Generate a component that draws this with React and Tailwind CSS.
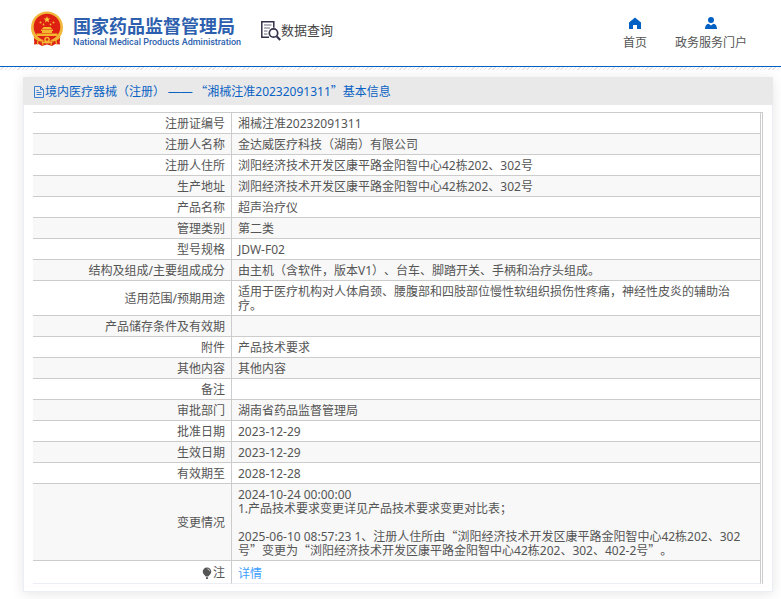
import React from 'react';

const rows = [
  { label: '注册证编号', value: '湘械注准20232091311' },
  { label: '注册人名称', value: '金达威医疗科技（湖南）有限公司' },
  { label: '注册人住所', value: '浏阳经济技术开发区康平路金阳智中心42栋202、302号' },
  { label: '生产地址', value: '浏阳经济技术开发区康平路金阳智中心42栋202、302号' },
  { label: '产品名称', value: '超声治疗仪' },
  { label: '管理类别', value: '第二类' },
  { label: '型号规格', value: 'JDW-F02' },
  { label: '结构及组成/主要组成成分', value: '由主机（含软件，版本V1）、台车、脚踏开关、手柄和治疗头组成。' },
  { label: '适用范围/预期用途', value: '适用于医疗机构对人体肩颈、腰腹部和四肢部位慢性软组织损伤性疼痛，神经性皮炎的辅助治疗。' },
  { label: '产品储存条件及有效期', value: '' },
  { label: '附件', value: '产品技术要求' },
  { label: '其他内容', value: '其他内容' },
  { label: '备注', value: '' },
  { label: '审批部门', value: '湖南省药品监督管理局' },
  { label: '批准日期', value: '2023-12-29' },
  { label: '生效日期', value: '2023-12-29' },
  { label: '有效期至', value: '2028-12-28' },
  {
    label: '变更情况',
    value:
      '2024-10-24 00:00:00\n1.产品技术要求变更详见产品技术要求变更对比表；\n\n2025-06-10 08:57:23 1、注册人住所由“浏阳经济技术开发区康平路金阳智中心42栋202、302号”变更为“浏阳经济技术开发区康平路金阳智中心42栋202、302、402-2号”。',
  },
];

// Quotes are set in the Chinese font so that they take a full-width cell
const Zh = ({ text }) =>
  text.split(/([“”])/).map((part, i) =>
    /^[“”]$/.test(part) ? (
      <span key={i} className="font-['Noto_Sans_CJK_SC',sans-serif] leading-none">{part}</span>
    ) : (
      part
    )
  );

const Emblem = () => (
  <svg viewBox="0 0 34 36" className="w-[34px] h-9 shrink-0" aria-hidden="true">
    <path d="M5 24l-1 9.500 4.500-.5 3.500 2 5-1.500 5 1.500 3.500-2 4.500.5L29 24z" fill="#dc2417" />
    <circle cx="17" cy="16.500" r="16" fill="#f2b83c" />
    <circle cx="17" cy="16" r="13.300" fill="#de2013" />
    <path d="M17 5.200l.9 2.300 2.500.1-2 1.500.7 2.400-2.100-1.400-2.100 1.400.7-2.400-2-1.500 2.500-.1z" fill="#f8cf3c" />
    <g fill="#f5b52e">
      <circle cx="10.500" cy="11.500" r="1" />
      <circle cx="13.500" cy="13.500" r=".9" />
      <circle cx="20.500" cy="13.500" r=".9" />
      <circle cx="23.500" cy="11.500" r="1" />
      <path d="M12 18l1.500-2h7l1.500 2zM11 18.500h12v1.500H11zM12 20h10v2H12zM6.500 22.500h21v2.500h-21z" />
    </g>
    <path d="M4 25c2 3 5 4.500 9 4.700l1.500-1.700h5l1.500 1.700c4-.2 7-1.700 9-4.700v5l-5 2-8-2.500L9 32l-5-2z" fill="#dc2417" />
    <path d="M4 26c2.500 3 6 4 9.500 4.200M30 26c-2.500 3-6 4-9.500 4.200M8 29.500l-.5 4M12.500 31l.5 3.500M21.500 31l-.5 3.500M26 29.500l.5 4" stroke="#f5b52e" strokeWidth="1.200" fill="none" />
    <circle cx="17" cy="28.500" r="2.800" fill="#f5b52e" />
    <circle cx="17" cy="28.500" r="1.200" fill="#de2013" />
  </svg>
);

const QueryIcon = () => (
  <svg viewBox="0 0 20 20" className="w-5 h-5 shrink-0" fill="none" stroke="#33324a" aria-hidden="true">
    <path d="M8 16.200H.8V.8h12v6" strokeWidth="1.500" />
    <path d="M3 4h7.500M3 7h6M3 10h3.500M3 13h3.500" strokeWidth="1.100" stroke="#66657a" />
    <circle cx="12.500" cy="12" r="4.200" strokeWidth="1.700" />
    <path d="M15.800 15.500l3.500 3.500" strokeWidth="2.200" />
  </svg>
);

const HomeIcon = () => (
  <svg viewBox="0 0 12 12" className="w-3 h-3" fill="#0060c4" aria-hidden="true">
    <path d="M6 .5l6 5V12H8V8H4v4H0V5.500z" />
  </svg>
);

const UserIcon = () => (
  <svg viewBox="0 0 12 12" className="w-3 h-3" fill="#0060c4" aria-hidden="true">
    <circle cx="6" cy="3" r="3" />
    <path d="M0 12c0-3 1.200-4.700 3.500-5.200L6 8.500l2.500-1.700C10.800 7.300 12 9 12 12z" />
  </svg>
);

const DocIcon = () => (
  <svg viewBox="0 0 11 12" className="w-[11px] h-3 shrink-0" fill="none" stroke="#3a7fd0" aria-hidden="true">
    <path d="M.5.5h6l3 3v8h-9zM6.500.5v3h3M2.500 4.500h2M2.500 6.500h5M2.500 8.500h5" />
  </svg>
);

const BulbIcon = () => (
  <svg viewBox="0 0 10 12" className="w-2.5 h-3" fill="#555" aria-hidden="true">
    <path d="M5 .5a4.300 4.300 0 0 1 4.300 4.300C9.300 7 7 8.200 6.300 9.500H3.700C3 8.200.7 7 .7 4.800A4.300 4.300 0 0 1 5 .5zM3.800 10.200h2.400L5.800 12H4.200z" />
    <path d="M5.500 2c1.200.2 2 1 2.200 2.200" stroke="#fff" strokeWidth=".8" fill="none" />
  </svg>
);

const Header = () => (
  <header className="flex h-[67px] items-start justify-between border-b border-[#0060c4] pl-[30px] pr-[34px]">
    <div className="flex items-start">
      <a href="#home" className="mt-[11px] flex items-start gap-[9px]">
        <Emblem />
        <span className="flex flex-col pt-[3px] text-[#2d5fae]">
          <span className="text-[18px] leading-[22px] font-bold font-['Noto_Sans_CJK_SC',sans-serif]">国家药品监督管理局</span>
          <span className="text-[9px] leading-3 font-medium font-[Roboto,sans-serif]">National Medical Products Administration</span>
        </span>
      </a>
      <h1 className="mt-[21px] ml-5 flex items-start text-[13px] leading-[18px] text-[#444]">
        <QueryIcon />
        数据查询
      </h1>
    </div>
    <nav className="mt-[17px] flex gap-7 leading-4 text-[#555]">
      <a href="#index" className="flex flex-col items-center gap-1.5">
        <HomeIcon />
        首页
      </a>
      <a href="#portal" className="flex flex-col items-center gap-1.5">
        <UserIcon />
        政务服务门户
      </a>
    </nav>
  </header>
);

const Row = ({ label, children }) => (
  <tr className="even:bg-[#f8f8f8]">
    <th scope="row" className="border-r border-b border-[#ccc] pt-1 pr-1.5 pb-0.5 text-right align-middle font-normal">
      {label}
    </th>
    <td className="h-[21px] border-r border-b border-[#ccc] pt-1 pr-2.5 pb-0.5 pl-1.5 align-middle whitespace-pre-line">
      {children}
    </td>
  </tr>
);

export default function App() {
  return (
    <div className="bg-white pb-2 text-[12px] font-['Noto_Sans','Noto_Sans_CJK_SC',sans-serif] [text-spacing-trim:space-all]">
      <Header />
      <div className="h-[3px] bg-[repeating-linear-gradient(135deg,#fff_0_2px,#e4e4e4_2px_3px)]" />
      <main className="mt-[7px] mr-2 ml-[23px] bg-white shadow-[0_2px_12px_rgba(0,0,0,0.1)]">
        <h2 className="flex h-7 items-center bg-[#e9e9e9] pt-0.5 pl-[11px] leading-4 text-[#0a62c4]">
          <DocIcon />
          <span>
            境内医疗器械（注册）{' '}
            <span className="font-['Liberation_Sans',sans-serif]">——</span>{' '}
            <Zh text="“湘械注准20232091311”基本信息" />
          </span>
        </h2>
        <div className="border border-t-0 border-[#ebeef5] px-[9px] pt-[7px] pb-[7px]">
          <div className="border-t border-r border-[#ccc] pr-px">
            <table className="w-full table-fixed border-separate border-spacing-0 leading-[14px] text-[#555]">
              <colgroup>
                <col className="w-[199px]" />
                <col />
              </colgroup>
              <tbody>
                {rows.map((row) => (
                  <Row key={row.label} label={row.label}>
                    <Zh text={row.value} />
                  </Row>
                ))}
                <tr>
                  <th scope="row" className="h-[23px] border-r border-b border-r-[#ccc] border-b-[#ebeef5] pt-0.5 pr-1.5 text-right font-normal">
                    <span className="flex items-center justify-end gap-px">
                      <BulbIcon />
                      注
                    </span>
                  </th>
                  <td className="border-r border-b border-r-[#ccc] border-b-[#ebeef5] pt-1 pl-1.5">
                    <a href="#detail" className="text-[#409eff]">详情</a>
                  </td>
                </tr>
              </tbody>
            </table>
          </div>
        </div>
      </main>
    </div>
  );
}
